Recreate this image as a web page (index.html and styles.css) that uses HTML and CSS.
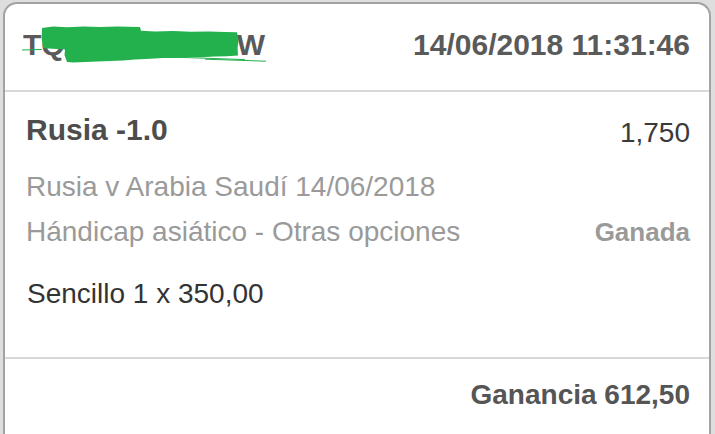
FILE: index.html
```html
<!DOCTYPE html>
<html>
<head>
    <title>Apuesta</title>
    <meta charset="utf-8" />
    <link rel="stylesheet" href="styles.css">
</head>
<body>
    <div class="bet-card">
        <div class="bet-header">
            <span class="bet-user">TQ<span class="masked">XXXXXXXX</span>W</span>
            <span class="bet-date">14/06/2018 11:31:46</span>
            <svg class="scribble" width="300" height="86" viewBox="0 0 300 86">
                <path fill="#22b14c" d="M37 24 L48 22.6 L62 23.2 L78 22.4 L95 23 L112 22.5 L135 23.1 L136 26.8 L150 27.4 L168 27 L186 27.8 L204 27.4 L220 28.1 L232 28.3 L233.5 36 L232.6 44 L233 51.5 L222 52.2 L210 52.6 L196 53.2 L185 53 L170 54 L158 54 L145 54.8 L130 55.6 L118 56.4 L105 57 L92 57.4 L80 58 L68 58.4 L62 58 L59.5 51 L60 45.5 L52 45 L44 44.6 L38 44 L36.6 34 Z" />
                <line x1="17" y1="46" x2="37" y2="45.4" stroke="#22b14c" stroke-width="1" />
                <line x1="165" y1="53" x2="240" y2="55.6" stroke="#22b14c" stroke-width="1" />
                <line x1="200" y1="55.2" x2="261" y2="57.2" stroke="#22b14c" stroke-width="1" />
            </svg>
        </div>

        <div class="bet-body">
            <div class="bet-row">
                <span class="bet-title">Rusia -1.0</span>
                <span class="bet-odds">1,750</span>
            </div>
            <div class="bet-detail">Rusia v Arabia Saudí 14/06/2018</div>
            <div class="bet-row bet-row-baseline">
                <span class="bet-detail">Hándicap asiático - Otras opciones</span>
                <span class="bet-status">Ganada</span>
            </div>
            <div class="bet-stake">Sencillo 1 x 350,00</div>
        </div>

        <div class="bet-footer">
            <span class="bet-profit">Ganancia 612,50</span>
        </div>
    </div>
</body>
</html>
```

FILE: styles.css
```css
html,body {
    height: 100%;
    margin: 0;
    overflow: hidden;
    font-family: "Liberation Sans", Arial, Helvetica, sans-serif;
    background-color: #dedede;
}

body {
    padding: 2px 4px 0 3px;
    box-sizing: border-box;
}

.bet-card {
    background-color: #ffffff;
    border: 2px solid #a2a2a2;
    border-bottom: none;
    border-radius: 14px 14px 0 0;
    min-height: 470px;
}

.bet-header {
    position: relative;
    display: flex;
    justify-content: space-between;
    padding: 23px 19px 27px 18px;
    border-bottom: 2px solid #d8d8d8;
    font-size: 30px;
    line-height: 36px;
    font-weight: bold;
    color: #5a5a5a;
}

.masked {
    display: inline-block;
    width: 172px;
    height: 36px;
    overflow: hidden;
    vertical-align: top;
    white-space: nowrap;
}

.scribble {
    position: absolute;
    left: 0;
    top: 0;
}

.bet-body {
    padding: 20px 19px 45px 21px;
    border-bottom: 2px solid #d8d8d8;
}

.bet-row {
    display: flex;
    justify-content: space-between;
    align-items: flex-start;
}

.bet-row-baseline {
    align-items: baseline;
}

.bet-title {
    font-size: 30px;
    line-height: 36px;
    font-weight: bold;
    color: #4d4d4d;
}

.bet-odds {
    margin-top: 3px;
    font-size: 28px;
    line-height: 36px;
    color: #3a3a3a;
}

.bet-detail {
    font-size: 28px;
    line-height: 45px;
    color: #9a9a9a;
}

.bet-body > .bet-detail {
    margin-top: 13px;
}

.bet-status {
    font-size: 26px;
    line-height: 45px;
    font-weight: bold;
    color: #9a9a9a;
}

.bet-stake {
    margin-top: 21px;
    padding-left: 1px;
    font-size: 28px;
    line-height: 36px;
    color: #333333;
}

.bet-footer {
    display: flex;
    justify-content: flex-end;
    padding: 18px 19px 20px 21px;
}

.bet-profit {
    font-size: 28px;
    line-height: 36px;
    font-weight: bold;
    color: #555555;
}
```
